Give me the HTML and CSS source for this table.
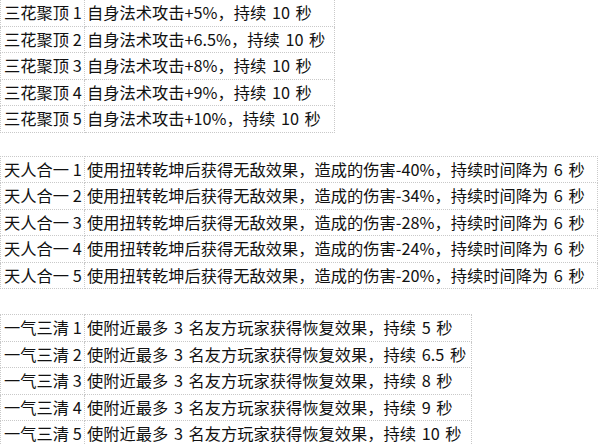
FILE: index.html
```html
<!DOCTYPE html>
<html lang="zh-CN">
<head>
<meta charset="utf-8">
<link rel="stylesheet" href="styles.css">
</head>
<body>
<div class="page">
  <table class="sheet t1">
    <tr><td class="name">三花聚顶 1</td><td class="desc">自身法术攻击+5%，持续 10 秒</td></tr>
    <tr><td class="name">三花聚顶 2</td><td class="desc">自身法术攻击+6.5%，持续 10 秒</td></tr>
    <tr><td class="name">三花聚顶 3</td><td class="desc">自身法术攻击+8%，持续 10 秒</td></tr>
    <tr><td class="name">三花聚顶 4</td><td class="desc">自身法术攻击+9%，持续 10 秒</td></tr>
    <tr><td class="name">三花聚顶 5</td><td class="desc">自身法术攻击+10%，持续 10 秒</td></tr>
  </table>
  <table class="sheet t2">
    <tr><td class="name">天人合一 1</td><td class="desc">使用扭转乾坤后获得无敌效果，造成的伤害-40%，持续时间降为 6 秒</td></tr>
    <tr><td class="name">天人合一 2</td><td class="desc">使用扭转乾坤后获得无敌效果，造成的伤害-34%，持续时间降为 6 秒</td></tr>
    <tr><td class="name">天人合一 3</td><td class="desc">使用扭转乾坤后获得无敌效果，造成的伤害-28%，持续时间降为 6 秒</td></tr>
    <tr><td class="name">天人合一 4</td><td class="desc">使用扭转乾坤后获得无敌效果，造成的伤害-24%，持续时间降为 6 秒</td></tr>
    <tr><td class="name">天人合一 5</td><td class="desc">使用扭转乾坤后获得无敌效果，造成的伤害-20%，持续时间降为 6 秒</td></tr>
  </table>
  <table class="sheet t3">
    <tr><td class="name">一气三清 1</td><td class="desc">使附近最多 3 名友方玩家获得恢复效果，持续 5 秒</td></tr>
    <tr><td class="name">一气三清 2</td><td class="desc">使附近最多 3 名友方玩家获得恢复效果，持续 6.5 秒</td></tr>
    <tr><td class="name">一气三清 3</td><td class="desc">使附近最多 3 名友方玩家获得恢复效果，持续 8 秒</td></tr>
    <tr><td class="name">一气三清 4</td><td class="desc">使附近最多 3 名友方玩家获得恢复效果，持续 9 秒</td></tr>
    <tr><td class="name">一气三清 5</td><td class="desc">使附近最多 3 名友方玩家获得恢复效果，持续 10 秒</td></tr>
  </table>
</div>
</body>
</html>
```
FILE: styles.css
```css
html, body {
  margin: 0;
  padding: 0;
  background: #ffffff;
}
.page {
  width: 600px;
  height: 445px;
  overflow: hidden;
  display: flex;
  flex-direction: column;
  align-items: flex-start;
}
.sheet {
  border-collapse: collapse;
  table-layout: fixed;
  font-family: "Noto Sans CJK SC", "Liberation Sans", sans-serif;
  font-size: 16.25px;
  color: #111111;
}
.sheet td {
  border: 1px dotted #c9c9c9;
  height: 26.5px;
  padding: 0 0 0 2px;
  white-space: nowrap;
  overflow: hidden;
  line-height: 25px;
  box-sizing: border-box;
}
.sheet .name {
  width: 84px;
  padding-left: 3px;
}
.sheet .desc {
  word-spacing: 2px;
}
.t1 {
  width: 335px;
  margin-top: -1px;
}
.t2 {
  width: 598px;
  margin-top: 23px;
}
.t3 {
  width: 472px;
  margin-top: 25px;
}
```
